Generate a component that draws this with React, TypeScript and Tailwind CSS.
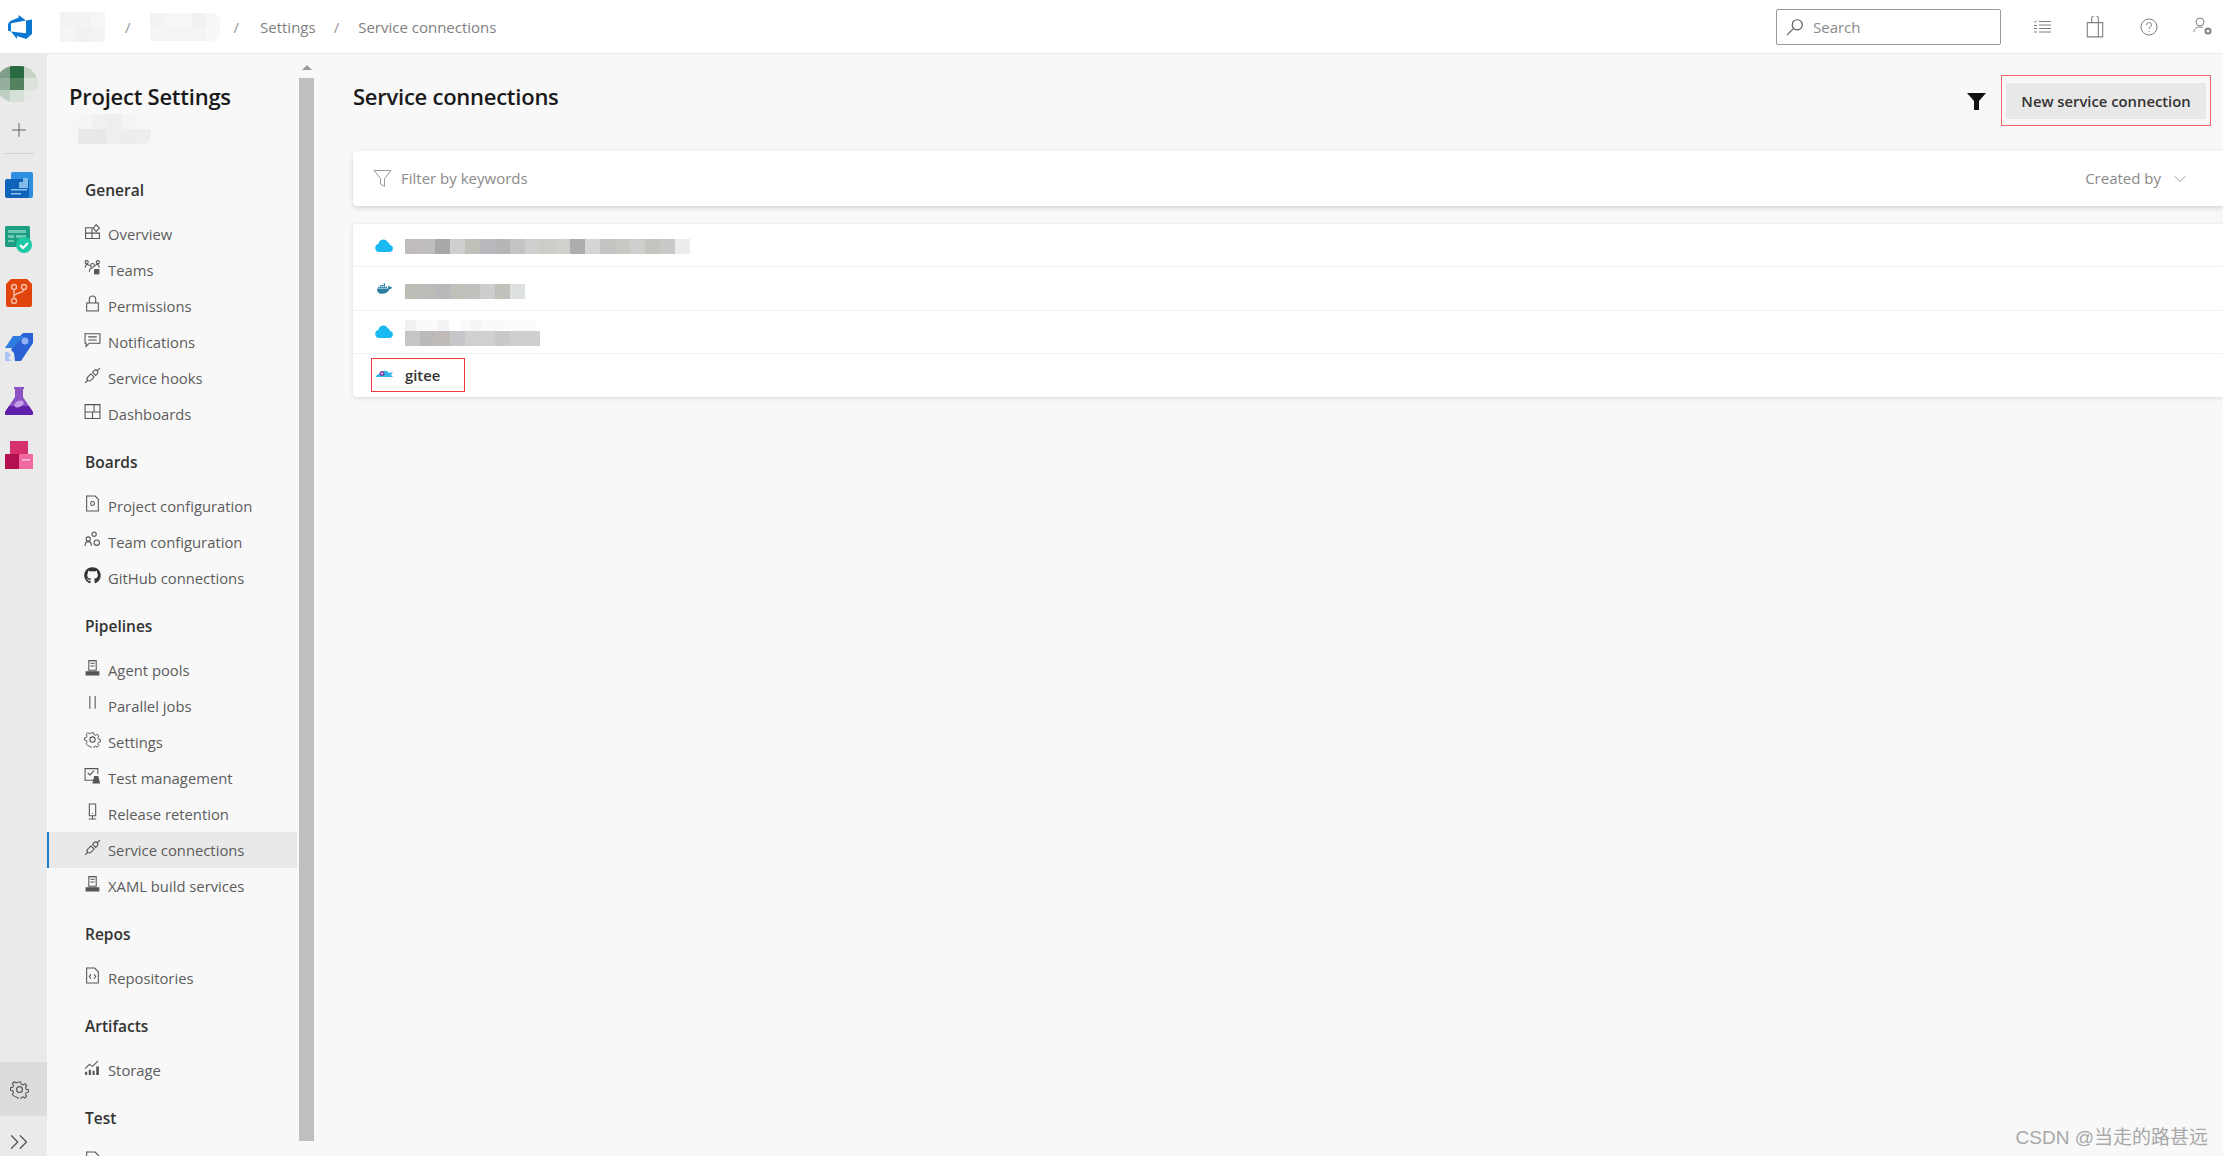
import { ChevronDown, ChevronsRight, Plus } from "lucide-react";
import { FaDocker, FaGithub } from "react-icons/fa";
import type { ReactNode } from "react";

const Ico = ({ children, size = 17 }: { children: ReactNode; size?: number }) => (
  <svg width={size} height={size} viewBox="0 0 16 16" fill="none" stroke="currentColor" strokeWidth="1">
    {children}
  </svg>
);

const gearPath = (
  <>
    <circle cx="8" cy="8" r="2.500" />
    <path d="M6.800 1h2.400l.4 2 1.700.7 1.700-1.100 1.700 1.700-1.100 1.700.7 1.700 2 .4v2.400l-2 .4-.7 1.700 1.100 1.700-1.700 1.700-1.700-1.100-1.700.7-.4 2H6.800l-.4-2-1.700-.7L3 14.200l-1.700-1.700 1.100-1.700-.7-1.700-2-.4V6.300l2-.4.7-1.700L1.300 2.500 3 .8l1.700 1.100 1.700-.7z" transform="translate(0.800 0.800) scale(0.9)" />
  </>
);

const icons: Record<string, ReactNode> = {
  overview: (
    <Ico>
      <path d="M1.500 4.500h6v10h-6zM7.500 9.500h7v5h-7zM1.500 9.500h6M8.500 5l3-3.500 3 3.500-3 3z" />
    </Ico>
  ),
  teams: (
    <Ico>
      <circle cx="2.500" cy="3" r="1.500" />
      <circle cx="8" cy="6" r="1.800" />
      <circle cx="13" cy="3" r="1.500" />
      <path d="M1 8l1.500-3.500 3 2M14.500 8L13 4.500l-3 2M5 12c0-2 1-3.500 3-3.500" />
      <rect x="10" y="10" width="4" height="4" fill="currentColor" />
    </Ico>
  ),
  lock: (
    <Ico>
      <rect x="2.500" y="7.500" width="11" height="7.500" />
      <path d="M5 7.500V4a3 3 0 0 1 6 0v3.500" />
    </Ico>
  ),
  chat: (
    <Ico>
      <path d="M1 2.500h14v9H5l-3 3v-3H1zM4 5.500h8M4 8.500h8" />
    </Ico>
  ),
  plug: (
    <Ico>
      <path d="M1 15l3-3M12 4l3-3M3.500 9.500l3-3 3 3-3 3a2 2 0 0 1-3-3zM8 5l1.500-1.500a2 2 0 0 1 3 3L11 8z" />
    </Ico>
  ),
  dash: (
    <Ico>
      <path d="M1 1.500h14v13H1zM1 8.500h14M8 8.500v6M9.500 1.500v7" />
    </Ico>
  ),
  project: (
    <Ico>
      <path d="M2.500 1h8l3 3v11h-11z" />
      <circle cx="8" cy="8" r="1.800" />
    </Ico>
  ),
  teamcfg: (
    <Ico>
      <circle cx="9.500" cy="3" r="2" />
      <circle cx="4" cy="7.500" r="2" />
      <path d="M1 14c0-3 1.200-4 3-4s3 1 3 4" />
      <circle cx="12" cy="11" r="2.500" />
    </Ico>
  ),
  github: <FaGithub size={17} className="text-[#333]" />,
  agent: (
    <Ico>
      <path d="M4.500 1.500h7v9h-7zM6 4h4M6 6.500h4" />
      <path d="M2 12h12v3H2z" fill="currentColor" />
    </Ico>
  ),
  parallel: (
    <Ico>
      <path d="M5.500 1v12M10.500 1v12" />
    </Ico>
  ),
  gear: <Ico>{gearPath}</Ico>,
  test: (
    <Ico>
      <path d="M9 12.500H1V1.500h12v5M3.500 5.500l2 2 4-4" />
      <path d="M10 9h3l1.500 6h-6z" fill="currentColor" />
    </Ico>
  ),
  release: (
    <Ico>
      <path d="M5 1h6v11H5zM8 12v3M4.500 15h7M8 9.500v.5" />
    </Ico>
  ),
  repo: (
    <Ico>
      <path d="M2.500 1h7.500l3.500 3.500V15h-11zM6.500 7L5 9l1.500 2M9.500 7L11 9l-1.500 2" />
    </Ico>
  ),
  storage: (
    <svg width="17" height="17" viewBox="0 0 16 16" fill="currentColor">
      <path d="M1 15v-3h2v3zM4.500 15v-5h2v5zM8 15v-4h2v4zM11.500 15V7h2.500v8z" />
      <path d="M1 9l4-4 3 2 5-5" fill="none" stroke="currentColor" />
    </svg>
  ),
};

type NavItem = { label: string; icon: string; active?: boolean };

const sections: { title: string; items: NavItem[] }[] = [
  {
    title: "General",
    items: [
      { label: "Overview", icon: "overview" },
      { label: "Teams", icon: "teams" },
      { label: "Permissions", icon: "lock" },
      { label: "Notifications", icon: "chat" },
      { label: "Service hooks", icon: "plug" },
      { label: "Dashboards", icon: "dash" },
    ],
  },
  {
    title: "Boards",
    items: [
      { label: "Project configuration", icon: "project" },
      { label: "Team configuration", icon: "teamcfg" },
      { label: "GitHub connections", icon: "github" },
    ],
  },
  {
    title: "Pipelines",
    items: [
      { label: "Agent pools", icon: "agent" },
      { label: "Parallel jobs", icon: "parallel" },
      { label: "Settings", icon: "gear" },
      { label: "Test management", icon: "test" },
      { label: "Release retention", icon: "release" },
      { label: "Service connections", icon: "plug", active: true },
      { label: "XAML build services", icon: "agent" },
    ],
  },
  { title: "Repos", items: [{ label: "Repositories", icon: "repo" }] },
  { title: "Artifacts", items: [{ label: "Storage", icon: "storage" }] },
  { title: "Test", items: [{ label: "", icon: "project" }] },
];

// pixelated strips standing in for the blurred-out names
const Mosaic = ({ colors, size = 15 }: { colors: string[]; size?: number }) => (
  <div className="flex">
    {colors.map((c, i) => (
      <div key={i} style={{ backgroundColor: c, width: size, height: size }} />
    ))}
  </div>
);

const Cloud = () => (
  <svg width="19" height="13" viewBox="0 0 19 13" fill="#19b9f1">
    <path d="M4 13a4 4 0 0 1-.6-7.900A5 5 0 0 1 12.600 3a3.400 3.400 0 0 1 2.400 3.100A3.500 3.500 0 0 1 15 13z" />
  </svg>
);

const GiteeCloud = () => (
  <svg width="19" height="11" viewBox="0 0 19 11">
    <path d="M1 9c0-2 2-3 4-3 1-3 4-4 7-3l2 2 4-1-2 3 2 2z" fill="#2fb5e8" />
    <circle cx="7" cy="5.500" r="2.500" fill="#7a3fa8" />
    <circle cx="7" cy="5.500" r="1" fill="#e8e0f0" />
  </svg>
);

const BoardsIcon = () => (
  <svg width="28" height="27" viewBox="0 0 28 27">
    <rect x="6" y="0" width="22" height="26" rx="2" fill="#2e8ee0" />
    <rect x="0" y="7" width="24" height="19" rx="2" fill="#0f63b8" />
    <path d="M14 13v-3h4V6h5v10h-9z" fill="#9fd0f5" opacity="0.8" />
    <path d="M6 17h16v1.500H6zM6 21h10v1.500H6z" fill="#8cc4ee" />
  </svg>
);

const TestPlansIcon = () => (
  <svg width="28" height="28" viewBox="0 0 28 28">
    <rect x="0" y="1" width="25" height="21" rx="1.500" fill="#1f9d83" />
    <path d="M3 5h18v3H3zM3 10h6v3H3zM11 10h10v3H11zM3 15h6v2H3z" fill="#7fd6c2" opacity="0.8" />
    <circle cx="19" cy="20" r="8" fill="#1fc8a5" />
    <path d="M15 20l3 3 5-5" fill="none" stroke="#fff" strokeWidth="2" />
  </svg>
);

const ReposIcon = () => (
  <svg width="26" height="28" viewBox="0 0 26 28">
    <path d="M5 0h16l5 5v21a2 2 0 0 1-2 2H2a2 2 0 0 1-2-2V5z" fill="#e1450b" />
    <g fill="none" stroke="#f6b9a0" strokeWidth="1.500">
      <circle cx="8" cy="8" r="2.500" />
      <circle cx="18" cy="8" r="2.500" />
      <circle cx="8" cy="22" r="2.500" />
      <path d="M8 10.500v9M18 10.500c0 4-10 3-10 7" />
    </g>
  </svg>
);

const PipelinesIcon = () => (
  <svg width="28" height="28" viewBox="0 0 28 28">
    <path d="M18 0h10v10L16 28h-6l-1-8-3-3 6-11z" fill="#2a62d6" />
    <path d="M8 3h11L8 15H0z" fill="#2f7be0" />
    <circle cx="20" cy="8" r="3.500" fill="#8fb2f2" />
    <path d="M0 19l3 0 3 3-3 3 4 3H0z" fill="#a8c4f5" />
  </svg>
);

const FlaskIcon = () => (
  <svg width="28" height="28" viewBox="0 0 28 28">
    <path d="M9 0h10v2h-1v8l10 15a2 2 0 0 1-2 3H2a2 2 0 0 1-2-3L10 10V2H9z" fill="#8a52c4" />
    <path d="M4 19h20l4 6a2 2 0 0 1-2 3H2a2 2 0 0 1-2-3z" fill="#5f1fa8" />
    <ellipse cx="14" cy="17" rx="5" ry="3" fill="#c7a0e8" transform="rotate(-25 14 17)" />
  </svg>
);

const ArtifactsIcon = () => (
  <svg width="28" height="28" viewBox="0 0 28 28">
    <rect x="5" y="0" width="18" height="14" fill="#d6306f" />
    <rect x="0" y="13" width="14" height="15" fill="#b4104f" />
    <rect x="14" y="13" width="14" height="15" fill="#f06aa0" />
    <path d="M17 18h8v1.500h-8z" fill="#f9c0d5" />
  </svg>
);

const railApps = [BoardsIcon, TestPlansIcon, ReposIcon, PipelinesIcon, FlaskIcon, ArtifactsIcon];

const Rail = () => (
  <aside className="flex w-[47px] shrink-0 flex-col bg-[#eaeaea]">
    <div className="flex flex-col items-center pr-[10px] pt-[12px]">
      <div className="ml-[-3px] grid h-[36px] w-[42px] grid-cols-3 overflow-hidden rounded-full">
        <div className="bg-[#7d9e88]" />
        <div className="bg-[#2a6a42]" />
        <div className="bg-[#c6d4c8]" />
        <div className="bg-[#94ae9b]" />
        <div className="bg-[#52825f]" />
        <div className="bg-[#dbe3dc]" />
        <div className="bg-[#c0cfc4]" />
        <div className="bg-[#d6dfd8]" />
        <div className="bg-[#e6e9e6]" />
      </div>
      <Plus size={22} strokeWidth={1} className="mt-[17px] text-[#555]" />
      <div className="mt-[12px] h-px w-[30px] bg-[#d2d2d2]" />
      <div className="mt-[4px] flex flex-col items-center">
        {railApps.map((App, i) => (
          <div key={i} className="flex h-[54px] items-center">
            <App />
          </div>
        ))}
      </div>
    </div>
    <div className="mt-auto flex h-[54px] items-center justify-center bg-[#dcdcdc] pr-[9px] text-[#555]">
      <Ico size={19}>{gearPath}</Ico>
    </div>
    <div className="flex h-[40px] items-center justify-center pr-[9px] pt-[12px]">
      <ChevronsRight size={30} strokeWidth={1} className="text-[#555]" />
    </div>
  </aside>
);

const Sidebar = () => (
  <div className="flex w-[269px] shrink-0 bg-[#f8f8f8]">
    <nav className="w-[252px] overflow-hidden pr-[2px]">
      <h1 className="ml-[22px] mt-[25px] text-[22px] leading-[34px] font-semibold tracking-[-0.25px] text-[#1a1a1a]">
        Project Settings
      </h1>
      <div className="ml-[16px] mt-[1px] w-[88px] overflow-hidden rounded-lg">
        <Mosaic colors={["#f6f6f6", "#f5f5f5", "#f0f0f0", "#eeeeee", "#f4f4f4", "#f6f6f6"]} size={15} />
        <Mosaic colors={["#f6f6f6", "#e9e9e9", "#e8e8e8", "#eeeeee", "#ededed", "#eeeeee"]} size={15} />
      </div>
      <div className="mt-[34px]">
        {sections.map((s) => (
          <div key={s.title} className="mb-[18px]">
            <h2 className="ml-[38px] text-[15.5px] leading-[24px] font-semibold text-[#333]">{s.title}</h2>
            <ul className="mt-[14px]">
              {s.items.map((it) => (
                <li
                  key={it.label || it.icon}
                  className={`flex h-[36px] items-center text-[14.8px] text-[#5c5c5c] ${
                    it.active ? "border-l-2 border-[#1b7fd0] bg-[#e9e9e9] pl-[35px]" : "pl-[37px]"
                  }`}
                >
                  <span className="mb-[6px] w-[24px] shrink-0 text-[#555]">{icons[it.icon]}</span>
                  {it.label}
                </li>
              ))}
            </ul>
          </div>
        ))}
      </div>
    </nav>
    <div className="flex w-[15px] shrink-0 flex-col items-center pt-[11px]">
      <div className="h-0 w-0 border-x-[5px] border-b-[5px] border-x-transparent border-b-[#9a9a9a]" />
      <div className="mt-[8px] h-[1063px] w-full bg-[#bfbfbf]" />
    </div>
  </div>
);

const TopBar = () => (
  <header className="flex h-[54px] shrink-0 items-center border-b border-[#e8e8e8] bg-white pl-[8px] pr-[11px] pt-[2px] text-[15px] text-[#808080]">
    <svg width="24" height="24" viewBox="0 0 24 24" fill="#0a78d0" className="mb-[2px]">
      <path d="M0 8.877L2.247 5.91l8.405-3.416V.022l7.37 5.393L2.966 8.338v8.225L0 15.707zm24-4.45v14.651l-5.753 4.9-9.303-3.057v3.056l-5.978-7.416 15.057 1.798V5.415z" />
    </svg>
    <div className="ml-[28px] mb-[2px]">
      <Mosaic colors={["#f3f3f3", "#f3f3f3", "#f6f6f6"]} />
      <Mosaic colors={["#f5f5f5", "#f1f1f1", "#f3f3f3"]} />
    </div>
    <span className="ml-[20px] text-[#999]">/</span>
    <div className="ml-[19px] mb-[2px] overflow-hidden rounded-r-lg">
      <Mosaic colors={["#f3f3f3", "#f6f6f6", "#f7f7f7", "#f1f1f1", "#f7f7f7"]} size={14} />
      <Mosaic colors={["#f5f5f5", "#f4f4f4", "#f4f4f4", "#f4f4f4", "#f8f8f8"]} size={14} />
    </div>
    <span className="ml-[14px] text-[#999]">/</span>
    <span className="ml-[21px]">Settings</span>
    <span className="ml-[18px] text-[#999]">/</span>
    <span className="ml-[19px]">Service connections</span>
    <div className="ml-auto mb-[2px] flex h-[36px] w-[225px] items-center rounded-[2px] border border-[#999] pl-[9px] text-[#8a8a8a]">
      <svg width="18" height="18" viewBox="0 0 16 16" fill="none" stroke="#555" strokeWidth="1">
        <circle cx="10" cy="6" r="4.500" />
        <path d="M6.500 9.500L1 15" />
      </svg>
      <span className="ml-[9px] mt-[2px]">Search</span>
    </div>
    <div className="ml-[31.5px] mb-[2px] flex items-center gap-[35.5px] text-[#808080]">
      <svg width="18" height="16" viewBox="0 0 18 16" fill="none" stroke="currentColor">
        <path d="M6 2.500h12M6 6h12M6 9.500h12M6 13h12M1 2.500l1 1 2-2M1 6.500h3M1 9.500h3M1 13h3" />
      </svg>
      <svg width="18" height="22" viewBox="0 0 16 20" fill="none" stroke="currentColor">
        <path d="M1 6h14v13H1zM5 6V2.500a2.500 2.500 0 0 1 6 0V6M11 6v13" />
      </svg>
      <svg width="18" height="18" viewBox="0 0 18 18" fill="none" stroke="currentColor">
        <circle cx="9" cy="9" r="8" />
        <path d="M6.500 7a2.500 2.500 0 1 1 3.500 2.300c-.7.4-1 .9-1 1.700M9 13v1" />
      </svg>
      <svg width="19" height="19" viewBox="0 0 19 19" fill="none" stroke="currentColor">
        <circle cx="7" cy="5" r="4" />
        <path d="M1 15c0-3 2.500-5 6-5 1 0 2 .2 2.800.5" />
        <circle cx="15" cy="14" r="2.500" strokeWidth="2" />
      </svg>
    </div>
  </header>
);

const Row = ({ children, last }: { children: ReactNode; last?: boolean }) => (
  <div className={`flex h-[43.25px] items-center pl-[19px] ${last ? "" : "border-b border-[#f0f0f0]"}`}>{children}</div>
);

const Content = () => (
  <main className="min-w-0 flex-1 bg-[#f8f8f8] pl-[37px]">
    <div className="flex items-start pt-[21px] pr-[12px]">
      <h1 className="mt-[4px] text-[22px] leading-[34px] font-semibold tracking-[-0.25px] text-[#1a1a1a]">
        Service connections
      </h1>
      <div className="ml-auto flex items-center">
        <svg width="19" height="17" viewBox="0 0 19 17" fill="#111" className="mt-[1px]">
          <path d="M0 0h19l-7 8v9H7V8z" />
        </svg>
        <div className="ml-[15px] border border-[#f0686e] pb-[6px] pl-[4px] pr-[4px] pt-[7px]">
          <button className="h-[36px] w-[200px] rounded-[2px] bg-[#e8e8e8] text-[14.8px] font-semibold text-[#333]">
            New service connection
          </button>
        </div>
      </div>
    </div>
    <div className="mt-[25px] flex h-[55px] items-center rounded-l-[4px] bg-white pl-[20px] pr-[33px] text-[15px] text-[#8a8a8a] shadow-[0_2px_5px_rgba(0,0,0,0.14)]">
      <svg width="19" height="19" viewBox="0 0 19 19" fill="none" stroke="#999">
        <path d="M1 1.500h17l-6.500 8v8l-4-2.500V9.500z" />
      </svg>
      <span className="ml-[9px]">Filter by keywords</span>
      <span className="ml-auto">Created by</span>
      <ChevronDown size={20} strokeWidth={1} className="ml-[9px]" />
    </div>
    <div className="mt-[18px] rounded-l-[4px] bg-white text-[14.8px] shadow-[0_1px_4px_rgba(0,0,0,0.14)]">
      <Row>
        <span className="w-[33px] pl-[3px]">
          <Cloud />
        </span>
        <div className="mt-[2px]">
          <Mosaic
            colors={["#c0bcbc", "#c0bebc", "#a8a9a7", "#ced0d0", "#c0c0b8", "#b8bac0", "#b4b7b6", "#c2c4c4", "#cfd0ce", "#cccdc8", "#d0d1cd", "#abaeac", "#d4d6d5", "#c4c5c3", "#c9c8c2", "#cfd0cd", "#c6c4be", "#c8cac8", "#ececec"]}
          />
        </div>
      </Row>
      <Row>
        <span className="w-[33px] pl-[5px] text-[#2b7ea3]">
          <FaDocker size={15} />
        </span>
        <div className="mt-[6px]">
          <Mosaic colors={["#bebcb6", "#bcbbb8", "#b8b9ba", "#c0c0ba", "#c0c0bc", "#cccece", "#c2c0ba", "#dde1e0"]} />
        </div>
      </Row>
      <Row>
        <span className="w-[33px] pl-[3px]">
          <Cloud />
        </span>
        <div className="mt-[2px]">
          <Mosaic size={11} colors={["#f0f0f0", "#fafafa", "#fafafa", "#f2f3f5", "#ffffff", "#fafafa", "#f5f5f3", "#fafafa", "#fafafa", "#fcfcfc", "#fcfcfc", "#fcfcfc"]} />
          <Mosaic colors={["#c6c7c4", "#bcbab8", "#bfb9b7", "#c6c6ca", "#d0d0d0", "#d0d0d0", "#c8c9c8", "#ced0d0", "#cfcfd2"]} />
        </div>
      </Row>
      <Row last>
        <div className="ml-[-1px] flex h-[34px] w-[94px] items-center border border-[#ee3a3f] pl-[3px]">
          <span className="mb-[3px] w-[30px]">
            <GiteeCloud />
          </span>
          <span className="font-semibold text-[#333]">gitee</span>
        </div>
      </Row>
    </div>
  </main>
);

export default function App() {
  return (
    <div className="relative flex h-screen flex-col overflow-hidden bg-[#f8f8f8] font-['Open_Sans',sans-serif]">
      <TopBar />
      <div className="flex min-h-0 flex-1">
        <Rail />
        <Sidebar />
        <Content />
      </div>
      <div className="absolute bottom-[4px] right-[15px] font-['Liberation_Sans','Noto_Sans_CJK_SC',sans-serif] text-[19px] text-[#a8a8a8]">
        CSDN @当走的路甚远
      </div>
    </div>
  );
}
